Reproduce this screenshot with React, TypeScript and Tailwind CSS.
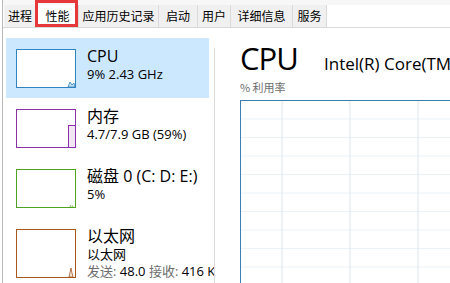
import React from 'react';

const tabs = [
  { label: '进程', w: 'w-[33px]' },
  { label: '性能', w: 'w-[42px]', active: true },
  { label: '应用历史记录', w: 'w-[80px]' },
  { label: '启动', w: 'w-[39px]' },
  { label: '用户', w: 'w-[33px]' },
  { label: '详细信息', w: 'w-[62px]' },
  { label: '服务', w: 'w-[34px]' },
];

function Thumb({ kind }: { kind: 'cpu' | 'mem' | 'disk' | 'net' }) {
  if (kind === 'cpu') {
    return (
      <svg width="60" height="39" className="block shrink-0">
        <rect x="0.5" y="0.5" width="59" height="38" fill="#fff" stroke="#2f83c0" />
        <path d="M52 38 L54 33 L56 36 L58 34 L59 38 Z" fill="#c6dff0" stroke="#2f83c0" strokeWidth="0.8" />
      </svg>
    );
  }
  if (kind === 'mem') {
    return (
      <svg width="60" height="39" className="block shrink-0">
        <rect x="0.5" y="0.5" width="59" height="38" fill="#fff" stroke="#8b32a8" />
        <rect x="52.5" y="16.5" width="7" height="22" fill="#f2e5f5" stroke="#8b32a8" strokeWidth="1" />
      </svg>
    );
  }
  if (kind === 'disk') {
    return (
      <svg width="60" height="39" className="block shrink-0">
        <rect x="0.5" y="0.5" width="59" height="38" fill="#fff" stroke="#4fa320" />
        <path d="M54 38 L54.5 36 L55 38 M56 38 L56.5 36.5 L57 38" stroke="#8cc56a" strokeWidth="0.8" fill="none" />
      </svg>
    );
  }
  return (
    <svg width="60" height="49" className="block shrink-0">
      <rect x="0.5" y="0.5" width="59" height="48" fill="#fff" stroke="#a7571b" />
      <path d="M53 48 L55 39 L56 44 L57 48 Z" fill="#f4e6da" stroke="#a7571b" strokeWidth="0.8" />
    </svg>
  );
}

const items = [
  { kind: 'cpu' as const, title: 'CPU', lines: ['9% 2.43 GHz'], selected: true },
  { kind: 'mem' as const, title: '内存', lines: ['4.7/7.9 GB (59%)'] },
  { kind: 'disk' as const, title: '磁盘 0 (C: D: E:)', lines: ['5%'] },
  { kind: 'net' as const, title: '以太网', lines: ['以太网'], net: true },
];

export default function App() {
  return (
    <div className="relative w-[450px] h-[283px] overflow-hidden bg-white text-black font-['Open_Sans','Noto_Sans_CJK_SC',sans-serif]">
      <div className="ml-[2px] h-full border-l border-[#b9b9b9] flex flex-col">
        {/* tab strip */}
        <div className="h-[5px] bg-[#f7f7f7] shrink-0" />
        <div className="flex h-[23px] shrink-0 border-b border-[#d9d9d9] pl-px">
          {tabs.map(t => (
            <div
              key={t.label}
              className={`${t.w} flex items-center justify-center text-[12px] border-r border-[#dadada] font-['Noto_Sans_CJK_SC',sans-serif] ${t.active ? 'bg-white' : 'bg-[#f0f0f0]'}`}
            >
              {t.label}
            </div>
          ))}
        </div>

        <div className="flex flex-1 min-h-0">
          {/* left list */}
          <div className="w-[211px] shrink-0 pt-[10px] pl-[3px] pr-[5px]">
            {items.map(it => (
              <div
                key={it.title}
                className={`flex h-[60px] pl-[10px] pt-[11px] gap-[11px] ${it.selected ? 'bg-[#cce8ff]' : ''}`}
              >
                <Thumb kind={it.kind} />
                <div className="-mt-[3px] flex flex-col min-w-0 whitespace-nowrap">
                  <div className="text-[16px] leading-[20px]">{it.title}</div>
                  {it.lines.map(l => (
                    <div key={l} className="text-[13px] leading-[17px]">{l}</div>
                  ))}
                  {it.net && (
                    <div className="text-[13px] leading-[17px]">
                      <span className="text-[#6d6d6d]">发送:</span> 48.0 <span className="text-[#6d6d6d]">接收:</span> 416 K
                    </div>
                  )}
                </div>
              </div>
            ))}
          </div>
          <div className="w-px bg-[#dcdcdc] mt-[20px] shrink-0" />

          {/* right detail */}
          <div className="flex-1 min-w-0 pl-[25px] pt-[10px] flex flex-col overflow-hidden">
            <div className="flex items-baseline whitespace-nowrap h-[40px]">
              <span className="inline-block shrink-0 text-[31px] leading-[40px] tracking-[-1px] w-[84px]">CPU</span>
              <span className="text-[17px]">Intel(R) Core(TM) i5-7200U CPU @ 2.50GHz</span>
            </div>
            <div className="text-[11px] leading-[14px] text-[#6d6d6d] mt-[2px] font-['Noto_Sans_CJK_SC',sans-serif]">% 利用率</div>
            <div className="mt-[6px] flex-1 border-l border-t border-[#3a7fb4] -mr-[10px]">
              <svg width="100%" height="100%" className="block">
                <defs>
                  <pattern id="grid" x="-1" y="0" width="68" height="18.5" patternUnits="userSpaceOnUse">
                    <path d="M42 0 V18.5" stroke="#d9e5ee" strokeWidth="1" />
                    <path d="M0 18.5 H68" stroke="#d9e5ee" strokeWidth="1" />
                  </pattern>
                </defs>
                <rect width="100%" height="100%" fill="url(#grid)" />
              </svg>
            </div>
          </div>
        </div>
      </div>

      {/* red highlight around the active tab */}
      <div className="absolute left-[35px] top-0 w-[43px] h-[27px] border-[3px] border-[#e5383b]" />
    </div>
  );
}
